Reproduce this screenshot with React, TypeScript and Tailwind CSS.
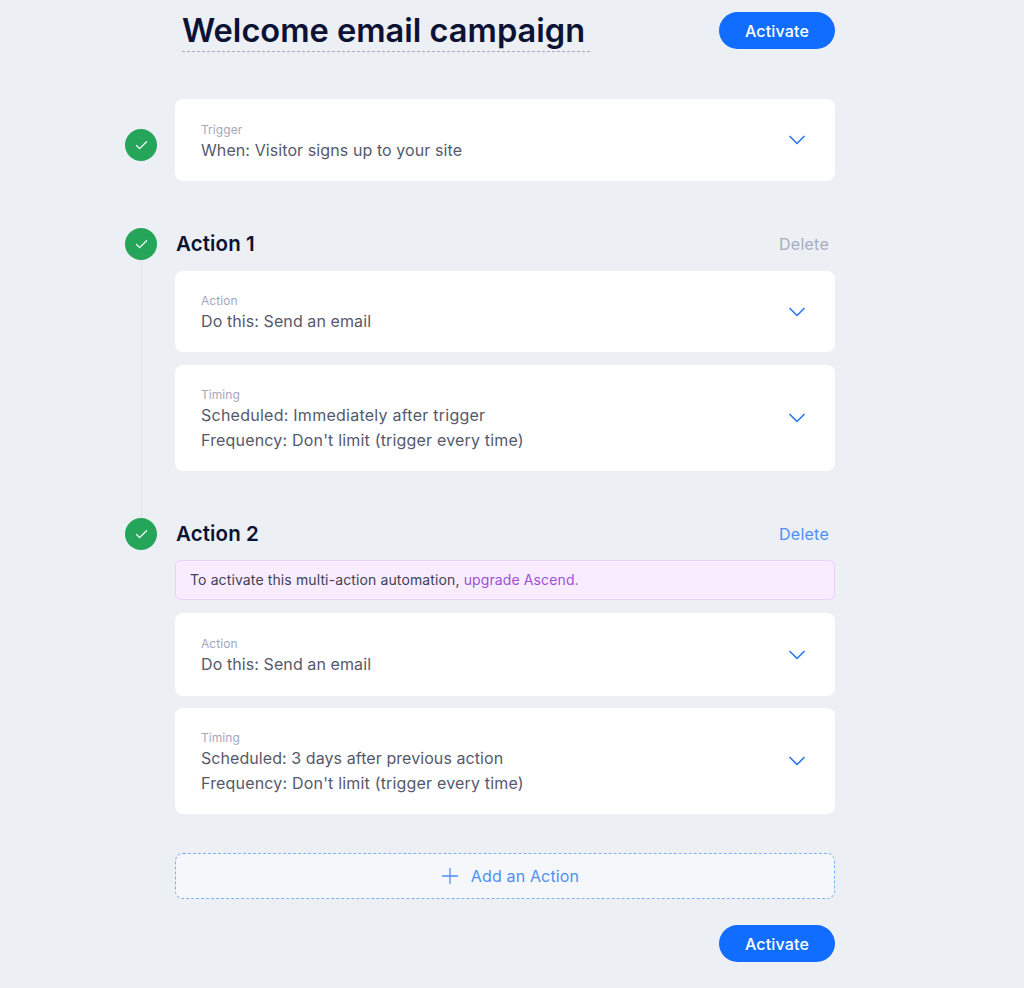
import { ChevronDown, Check, Plus } from "lucide-react";

const font = { fontFamily: "Inter, sans-serif" };

type Line = { text: string; tracking: string };

const FREQUENCY: Line = { text: "Frequency: Don't limit (trigger every time)", tracking: "tracking-[0.18px]" };

function StepDot() {
  return (
    <div className="flex h-8 w-8 shrink-0 items-center justify-center rounded-full bg-[#25a55a]">
      <Check className="h-[15px] w-[15px] text-white" strokeWidth={2} />
    </div>
  );
}

function ActivateButton() {
  return (
    <button className="flex h-[37px] w-[116px] items-center justify-center rounded-full bg-[#116dff] text-base font-medium tracking-[0.15px] text-white">
      Activate
    </button>
  );
}

/** White collapsed card: small grey label, one or two lines of value, blue chevron. */
function Card({ label, lines, height }: { label: string; lines: Line[]; height: string }) {
  return (
    <div className={`flex items-center justify-between rounded-lg bg-white pl-[26px] pr-6 ${height}`}>
      <div className="pt-[3px]">
        <p className="text-xs leading-[17px] tracking-[0.05px] text-[#a3a7bb]">{label}</p>
        {lines.map((line) => (
          <p key={line.text} className={`text-base leading-[25px] text-[#55596c] ${line.tracking}`}>
            {line.text}
          </p>
        ))}
      </div>
      <ChevronDown className="h-7 w-7 text-[#2f7bf0]" strokeWidth={1.5} />
    </div>
  );
}

function ActionHeader({ title, deleteClass }: { title: string; deleteClass: string }) {
  return (
    <div className="flex h-8 items-center justify-between pl-px pr-[6px]">
      <h2 className="text-[20.5px] font-semibold tracking-[0.1px] text-[#0b1233]">{title}</h2>
      <span className={`text-base tracking-[0.25px] ${deleteClass}`}>Delete</span>
    </div>
  );
}

export default function App() {
  return (
    <div style={font} className="h-[988px] w-[1024px] overflow-hidden bg-[#ecEff4]">
      <div className="ml-[125px] w-[710px]">
        {/* title row */}
        <div className="ml-[50px] flex items-start justify-between pt-3">
          <h1 className="ml-[7px] h-10 w-[408px] whitespace-nowrap border-b border-dashed border-[#a8acc0] text-[32.6px] font-semibold leading-[36px] text-[#0b1233]">
            Welcome email campaign
          </h1>
          <ActivateButton />
        </div>

        {/* trigger */}
        <div className="mt-[47px] flex items-start gap-[18px]">
          <div className="mt-[30px]">
            <StepDot />
          </div>
          <div className="flex-1">
            <Card
              label="Trigger"
              lines={[{ text: "When: Visitor signs up to your site", tracking: "tracking-[0.09px]" }]}
              height="h-[82px]"
            />
          </div>
        </div>

        {/* action 1 */}
        <div className="mt-[47px] flex h-[290px] gap-[18px]">
          <div className="flex flex-col items-center">
            <StepDot />
            <div className="w-px flex-1 bg-[#dfe3ea]" />
          </div>
          <div className="flex flex-1 flex-col">
            <ActionHeader title="Action 1" deleteClass="text-[#a8acc0]" />
            <div className="mt-[11px] flex flex-col gap-[13px]">
              <Card
                label="Action"
                lines={[{ text: "Do this: Send an email", tracking: "tracking-[0.09px]" }]}
                height="h-[81px]"
              />
              <Card
                label="Timing"
                lines={[{ text: "Scheduled: Immediately after trigger", tracking: "tracking-[0.25px]" }, FREQUENCY]}
                height="h-[106px]"
              />
            </div>
          </div>
        </div>

        {/* action 2 */}
        <div className="flex gap-[18px]">
          <StepDot />
          <div className="flex flex-1 flex-col">
            <ActionHeader title="Action 2" deleteClass="text-[#4e8ff8]" />
            <div className="mt-[10px] flex h-10 items-center rounded-md border border-[#ecd0f6] bg-[#f9ecfe] px-[14px] text-sm tracking-[0.12px] text-[#3d4258]">
              <span>
                To activate this multi-action automation, <span className="text-[#a14fd8]">upgrade Ascend.</span>
              </span>
            </div>
            <div className="mt-[13px] flex flex-col gap-3">
              <Card
                label="Action"
                lines={[{ text: "Do this: Send an email", tracking: "tracking-[0.09px]" }]}
                height="h-[83px]"
              />
              <Card
                label="Timing"
                lines={[{ text: "Scheduled: 3 days after previous action", tracking: "tracking-[0.07px]" }, FREQUENCY]}
                height="h-[106px]"
              />
            </div>
            <button className="mt-[39px] flex h-[46px] items-center justify-center gap-[8px] rounded-lg border border-dashed border-[#7fb0f5] bg-[#f5f7fa] pl-[6px] text-base tracking-[0.15px] text-[#4e8ff8]">
              <Plus className="h-[26px] w-[26px]" strokeWidth={1.2} />
              Add an Action
            </button>
            <div className="mt-[26px] flex justify-end">
              <ActivateButton />
            </div>
          </div>
        </div>
      </div>
    </div>
  );
}
